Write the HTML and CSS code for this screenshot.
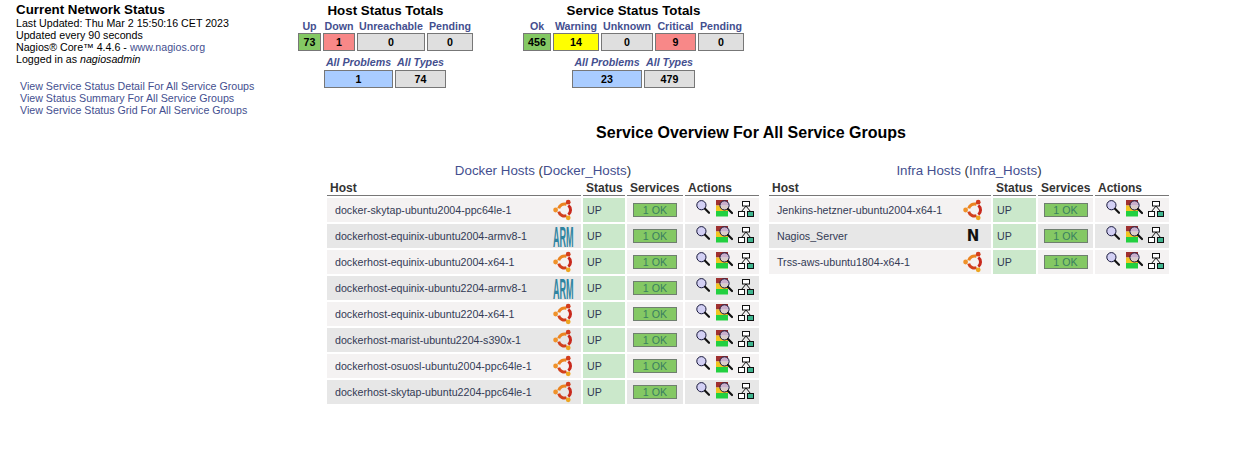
FILE: index.html
```html
<!DOCTYPE html>
<html lang="en">
<head>
<meta charset="utf-8">
<title>Current Network Status</title>
<link rel="stylesheet" href="styles.css">
</head>
<body>
<svg class="defs" width="0" height="0" aria-hidden="true">
  <defs>
    <symbol id="ubuntu" viewBox="0 0 20 22">
      <g fill="none" stroke-width="3">
        <path d="M5.7 9.4A6 6 0 0 1 13.55 5.36" stroke="#ec8420"/>
        <path d="M15.36 6.4A6 6 0 0 1 15.36 15.6" stroke="#c8281c"/>
        <path d="M13.55 16.64A6 6 0 0 1 5.7 12.6" stroke="#d2401c"/>
      </g>
      <circle cx="2.6" cy="11" r="2.4" fill="#f0922a"/>
      <circle cx="15.2" cy="3.2" r="2.4" fill="#d23c1e"/>
      <circle cx="15.2" cy="18.8" r="2.4" fill="#eda520"/>
    </symbol>
    <symbol id="zoom" viewBox="0 0 14 14">
      <circle cx="5.4" cy="5.2" r="4.6" fill="#d3d0f4" stroke="#16163a"/>
      <path d="M9 8.8l4 4" stroke="#111" stroke-width="2.2" stroke-linecap="round"/>
    </symbol>
    <symbol id="status" viewBox="0 0 17 17">
      <rect x="0" y="0" width="12" height="5.5" fill="#a03030"/>
      <rect x="0" y="5.5" width="12" height="5.5" fill="#f2c420"/>
      <rect x="0" y="11" width="12" height="5.5" fill="#22d040"/>
      <circle cx="8.5" cy="5.4" r="4.6" fill="#d3d0f4" fill-opacity=".8" stroke="#16163a"/>
      <path d="M12 9l4 4" stroke="#111" stroke-width="2.2" stroke-linecap="round"/>
    </symbol>
    <symbol id="map" viewBox="0 0 16 16">
      <rect x="4.5" y="0.5" width="7" height="4.5" fill="#fff" stroke="#111"/>
      <path d="M8 5L3.5 10.5M8 5l4.5 5.5" fill="none" stroke="#111"/>
      <rect x="0.5" y="10.5" width="6" height="5" fill="#fff" stroke="#111"/>
      <rect x="9.5" y="10.5" width="6" height="5" fill="#3fb58f" stroke="#111"/>
    </symbol>
  </defs>
</svg>

<header class="top">
  <section class="info">
    <h1 class="info-title">Current Network Status</h1>
    <p class="info-lines">Last Updated: Thu Mar 2 15:50:16 CET 2023<br>Updated every 90 seconds<br>Nagios® Core™ 4.4.6 - <a href="#">www.nagios.org</a><br>Logged in as <i>nagiosadmin</i></p>
    <nav class="info-links">
      <a href="#">View Service Status Detail For All Service Groups</a>
      <a href="#">View Status Summary For All Service Groups</a>
      <a href="#">View Service Status Grid For All Service Groups</a>
    </nav>
  </section>

  <section class="totals totals-host">
    <h2 class="totals-title">Host Status Totals</h2>
    <div class="tot-grid host-grid">
      <span class="tot-h">Up</span><span class="tot-h">Down</span><span class="tot-h">Unreachable</span><span class="tot-h">Pending</span>
      <b class="tot-c green">73</b><b class="tot-c red">1</b><b class="tot-c gray">0</b><b class="tot-c gray">0</b>
    </div>
    <div class="tot-grid host-sum">
      <em class="tot-h">All Problems</em><em class="tot-h">All Types</em>
      <b class="tot-c blue">1</b><b class="tot-c gray">74</b>
    </div>
  </section>

  <section class="totals totals-service">
    <h2 class="totals-title">Service Status Totals</h2>
    <div class="tot-grid svc-grid">
      <span class="tot-h">Ok</span><span class="tot-h">Warning</span><span class="tot-h">Unknown</span><span class="tot-h">Critical</span><span class="tot-h">Pending</span>
      <b class="tot-c green">456</b><b class="tot-c yellow">14</b><b class="tot-c gray">0</b><b class="tot-c red">9</b><b class="tot-c gray">0</b>
    </div>
    <div class="tot-grid svc-sum">
      <em class="tot-h">All Problems</em><em class="tot-h">All Types</em>
      <b class="tot-c blue">23</b><b class="tot-c gray">479</b>
    </div>
  </section>
</header>

<main class="overview">
  <h2 class="overview-title">Service Overview For All Service Groups</h2>
  <div class="groups">
    <div class="group group-docker">
      <div class="group-cap"><a href="#">Docker Hosts</a> (<a href="#">Docker_Hosts</a>)</div>
      <table class="tbl">
        <colgroup><col class="c-host"><col class="c-status"><col class="c-svc"><col class="c-act"></colgroup>
        <thead><tr><th>Host</th><th>Status</th><th>Services</th><th>Actions</th></tr></thead>
        <tbody>
          <tr class="odd"><td class="host"><div class="host-in"><a href="#">docker-skytap-ubuntu2004-ppc64le-1</a><svg class="os"><use href="#ubuntu"/></svg></div></td><td class="up">UP</td><td class="svc"><span class="ok">1 OK</span></td><td class="act"><svg class="i1"><use href="#zoom"/></svg><svg class="i2"><use href="#status"/></svg><svg class="i3"><use href="#map"/></svg></td></tr>
          <tr class="even"><td class="host"><div class="host-in"><a href="#">dockerhost-equinix-ubuntu2004-armv8-1</a><svg class="os os-arm" viewBox="0 0 66 22" preserveAspectRatio="none"><text class="arm" x="0" y="21.6">ARM</text></svg></div></td><td class="up">UP</td><td class="svc"><span class="ok">1 OK</span></td><td class="act"><svg class="i1"><use href="#zoom"/></svg><svg class="i2"><use href="#status"/></svg><svg class="i3"><use href="#map"/></svg></td></tr>
          <tr class="odd"><td class="host"><div class="host-in"><a href="#">dockerhost-equinix-ubuntu2004-x64-1</a><svg class="os"><use href="#ubuntu"/></svg></div></td><td class="up">UP</td><td class="svc"><span class="ok">1 OK</span></td><td class="act"><svg class="i1"><use href="#zoom"/></svg><svg class="i2"><use href="#status"/></svg><svg class="i3"><use href="#map"/></svg></td></tr>
          <tr class="even"><td class="host"><div class="host-in"><a href="#">dockerhost-equinix-ubuntu2204-armv8-1</a><svg class="os os-arm" viewBox="0 0 66 22" preserveAspectRatio="none"><text class="arm" x="0" y="21.6">ARM</text></svg></div></td><td class="up">UP</td><td class="svc"><span class="ok">1 OK</span></td><td class="act"><svg class="i1"><use href="#zoom"/></svg><svg class="i2"><use href="#status"/></svg><svg class="i3"><use href="#map"/></svg></td></tr>
          <tr class="odd"><td class="host"><div class="host-in"><a href="#">dockerhost-equinix-ubuntu2204-x64-1</a><svg class="os"><use href="#ubuntu"/></svg></div></td><td class="up">UP</td><td class="svc"><span class="ok">1 OK</span></td><td class="act"><svg class="i1"><use href="#zoom"/></svg><svg class="i2"><use href="#status"/></svg><svg class="i3"><use href="#map"/></svg></td></tr>
          <tr class="even"><td class="host"><div class="host-in"><a href="#">dockerhost-marist-ubuntu2204-s390x-1</a><svg class="os"><use href="#ubuntu"/></svg></div></td><td class="up">UP</td><td class="svc"><span class="ok">1 OK</span></td><td class="act"><svg class="i1"><use href="#zoom"/></svg><svg class="i2"><use href="#status"/></svg><svg class="i3"><use href="#map"/></svg></td></tr>
          <tr class="odd"><td class="host"><div class="host-in"><a href="#">dockerhost-osuosl-ubuntu2004-ppc64le-1</a><svg class="os"><use href="#ubuntu"/></svg></div></td><td class="up">UP</td><td class="svc"><span class="ok">1 OK</span></td><td class="act"><svg class="i1"><use href="#zoom"/></svg><svg class="i2"><use href="#status"/></svg><svg class="i3"><use href="#map"/></svg></td></tr>
          <tr class="even"><td class="host"><div class="host-in"><a href="#">dockerhost-skytap-ubuntu2204-ppc64le-1</a><svg class="os"><use href="#ubuntu"/></svg></div></td><td class="up">UP</td><td class="svc"><span class="ok">1 OK</span></td><td class="act"><svg class="i1"><use href="#zoom"/></svg><svg class="i2"><use href="#status"/></svg><svg class="i3"><use href="#map"/></svg></td></tr>
        </tbody>
      </table>
    </div>
    <div class="group group-infra">
      <div class="group-cap"><a href="#">Infra Hosts</a> (<a href="#">Infra_Hosts</a>)</div>
      <table class="tbl">
        <colgroup><col class="c-host"><col class="c-status"><col class="c-svc"><col class="c-act"></colgroup>
        <thead><tr><th>Host</th><th>Status</th><th>Services</th><th>Actions</th></tr></thead>
        <tbody>
          <tr class="odd"><td class="host"><div class="host-in"><a href="#">Jenkins-hetzner-ubuntu2004-x64-1</a><svg class="os"><use href="#ubuntu"/></svg></div></td><td class="up">UP</td><td class="svc"><span class="ok">1 OK</span></td><td class="act"><svg class="i1"><use href="#zoom"/></svg><svg class="i2"><use href="#status"/></svg><svg class="i3"><use href="#map"/></svg></td></tr>
          <tr class="even"><td class="host"><div class="host-in"><a href="#">Nagios_Server</a><span class="os os-n">N</span></div></td><td class="up">UP</td><td class="svc"><span class="ok">1 OK</span></td><td class="act"><svg class="i1"><use href="#zoom"/></svg><svg class="i2"><use href="#status"/></svg><svg class="i3"><use href="#map"/></svg></td></tr>
          <tr class="odd"><td class="host"><div class="host-in"><a href="#">Trss-aws-ubuntu1804-x64-1</a><svg class="os"><use href="#ubuntu"/></svg></div></td><td class="up">UP</td><td class="svc"><span class="ok">1 OK</span></td><td class="act"><svg class="i1"><use href="#zoom"/></svg><svg class="i2"><use href="#status"/></svg><svg class="i3"><use href="#map"/></svg></td></tr>
        </tbody>
      </table>
    </div>
  </div>
</main>
</body>
</html>
```
FILE: styles.css
```css
* { box-sizing: border-box; }
html, body { margin: 0; padding: 0; }
body { font-family: "Liberation Sans", Arial, sans-serif; font-size: 10.67px; color: #000; background: #fff; }
a { color: #444f8f; text-decoration: none; }
.defs { display: block; height: 0; }

.top { display: flex; align-items: flex-start; height: 116px; padding: 3px 0 0 16px; }
.info { width: 282px; }
.info-title { margin: 0; font-size: 13.33px; line-height: 14px; font-weight: bold; }
.info-lines { margin: 0; line-height: 12px; }
.info-links { display: flex; flex-direction: column; margin: 15px 0 0 4px; line-height: 12px; }

.totals-title { margin: 0; font-size: 13.33px; line-height: 15px; font-weight: bold; text-align: center; color: #000; }
.totals-host { width: 175px; }
.totals-service { width: 221px; margin-left: 50px; }
.tot-grid { display: grid; column-gap: 2px; }
.tot-h { display: block; text-align: center; font-weight: bold; color: #444f8f; font-size: 10.67px; line-height: 12px; padding: 2px 0 1px; white-space: nowrap; }
em.tot-h { font-style: italic; }
.tot-c { display: block; height: 18px; line-height: 16px; border: 1px solid #777; text-align: center; font-size: 10.67px; font-weight: bold; }
.host-grid { grid-template-columns: 23px 32px 68px 46px; }
.host-sum { grid-template-columns: 69px 51px; margin: 0 0 0 26px; }
.svc-grid { grid-template-columns: 28px 46px 52px 41px 46px; }
.svc-sum { grid-template-columns: 70px 51px; margin-left: 49px; }
.totals .tot-grid + .tot-grid { margin-top: 3px; }
.host-sum .tot-h, .svc-sum .tot-h { padding-bottom: 2px; }
.green { background: #84c864; }
.red { background: #f88888; }
.yellow { background: #ffff00; }
.gray { background: #dfdfdf; }
.blue { background: #a9ccff; }

.overview { padding-left: 325px; width: 1177px; }
.overview-title { margin: 7px 0 0; font-size: 16px; line-height: 20px; font-weight: bold; text-align: center; }
.groups { display: flex; align-items: flex-start; gap: 6px; margin-top: 20px; }
.group-cap { text-align: center; font-size: 13.33px; line-height: 16px; color: #333; }
.group-cap a { color: #444f8f; }
.tbl { border-collapse: separate; border-spacing: 2px; table-layout: fixed; color: #333a55; }
.group-docker .tbl { width: 436px; }
.group-infra .tbl { width: 402px; }
.c-status { width: 42px; }
.c-svc { width: 56px; }
.c-act { width: 74px; }
.group-docker .c-host { width: 254px; }
.group-infra .c-host { width: 222px; }
.group-infra .c-status { width: 43px; }
.group-infra .c-svc { width: 55px; }
th { text-align: left; padding: 0 3px; height: 15px; font-size: 12px; line-height: 14px; font-weight: bold; color: #333; border-bottom: 1px solid #777; white-space: nowrap; }
td { padding: 0; height: 24px; font-size: 10.67px; vertical-align: middle; }
.odd td { background: #f4f2f2; }
.even td { background: #e7e7e7; }
.host-in { display: flex; align-items: center; justify-content: space-between; padding: 0 8px; }
.host-in a { color: #333a55; white-space: nowrap; }
.os { display: block; width: 20px; height: 22px; flex: none; }
.os-arm { overflow: visible; }
.arm { font-family: "Liberation Sans", Arial, sans-serif; font-size: 30px; font-weight: bold; fill: #2f84a0; }
.os-n { font-weight: bold; font-size: 15px; line-height: 22px; color: #111; text-align: center; font-family: "DejaVu Sans", sans-serif; }
td.up { background: #cbe8cb; padding-left: 4px; color: #333a55; }
td.svc { text-align: center; }
.ok { display: inline-block; width: 44px; height: 14px; line-height: 12px; border: 1px solid #6f7f6f; background: #84c864; color: #3a7f60; vertical-align: middle; }
td.act { white-space: nowrap; padding: 2px 0 0 11px; vertical-align: top; }
.act svg { display: inline-block; vertical-align: top; }
.i1 { width: 14px; height: 14px; }
.i2 { width: 17px; height: 17px; margin-left: 6px; }
.i3 { width: 16px; height: 16px; margin-left: 5px; margin-top: 1px; }
```
